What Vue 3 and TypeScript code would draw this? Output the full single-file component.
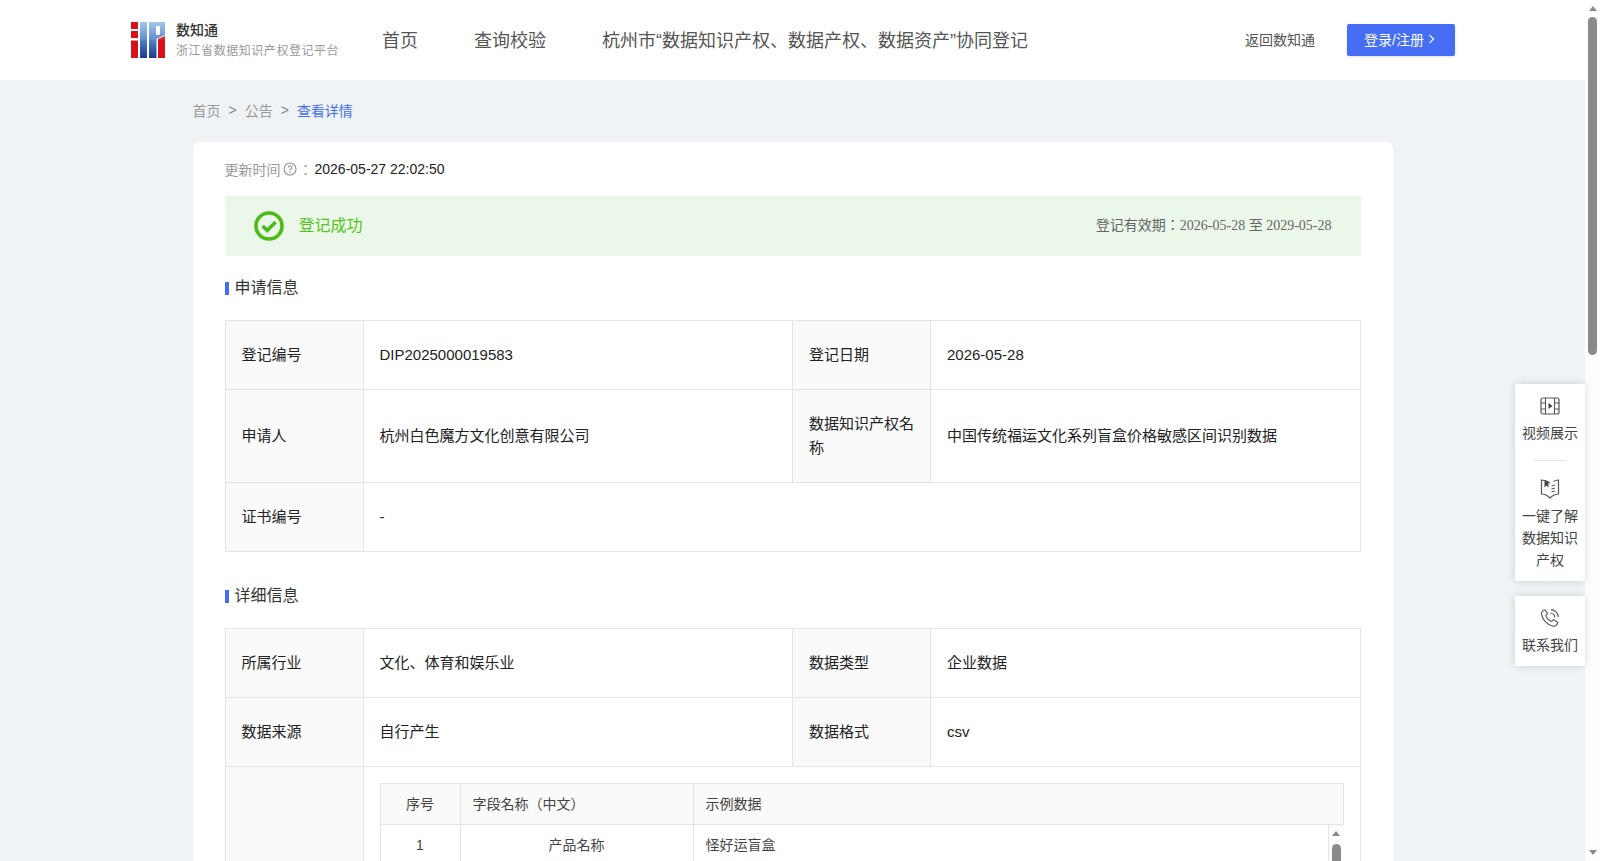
<script setup lang="ts">
const stripes: number[] = [1, 3, 5, 7, 9, 11, 13, 15, 17]
</script>

<template>
  <div class="page">
    <div class="content">
      <header class="topbar">
        <div class="brand">
          <svg class="logo" viewBox="0 0 34 36" aria-hidden="true">
            <defs>
              <linearGradient id="bluegrad" x1="0" y1="0" x2="0" y2="1">
                <stop offset="0" stop-color="#9cc2ea" />
                <stop offset="0.5" stop-color="#4f82c6" />
                <stop offset="1" stop-color="#1c3a8c" />
              </linearGradient>
            </defs>
            <rect x="0" y="0" width="7" height="7" fill="#d9101a" />
            <rect x="0" y="9" width="7" height="7" fill="#d9101a" />
            <rect x="0" y="18.5" width="7" height="17.5" fill="#d9101a" />
            <rect x="9" y="0" width="7" height="36" fill="url(#bluegrad)" />
            <path d="M18 0H34V13L25.5 17V36H18ZM25 4V12.5H29V4Z" fill-rule="evenodd" fill="url(#bluegrad)" />
            <path d="M27 17L34 14V36H27Z" fill="#d9101a" />
            <g stroke="#fff" stroke-opacity=".22" stroke-width=".8">
              <line v-for="y in stripes" :key="y" x1="9" x2="34" :y1="y" :y2="y" />
            </g>
            <rect x="16" y="0" width="2" height="18" fill="#fff" />
            <rect x="25" y="4" width="4" height="8.5" fill="#fff" />
          </svg>
          <div class="brand-text">
            <div class="brand-name">数知通</div>
            <div class="brand-sub">浙江省数据知识产权登记平台</div>
          </div>
        </div>
        <nav class="nav">
          <span>首页</span>
          <span>查询校验</span>
          <span>杭州市“数据知识产权、数据产权、数据资产”协同登记</span>
        </nav>
        <div class="actions">
          <span class="back">返回数知通</span>
          <button class="login">登录/注册
            <svg viewBox="0 0 8 12" class="chev"><path d="M1.5 1L6.5 6L1.5 11" fill="none" stroke="#fff" stroke-width="1.4" /></svg>
          </button>
        </div>
      </header>

      <main class="main">
        <div class="crumbs">
          <span>首页</span><i>&gt;</i><span>公告</span><i>&gt;</i><span class="current">查看详情</span>
        </div>

        <section class="card">
          <div class="updated">
            <span class="muted">更新时间</span>
            <svg class="help" viewBox="0 0 14 14"><circle cx="7" cy="7" r="6" fill="none" stroke="#999" stroke-width="1.2" /><path d="M5.2 5.6A1.8 1.8 0 1 1 7.6 7.3C7.1 7.5 7 7.8 7 8.4" fill="none" stroke="#999" stroke-width="1.2" /><circle cx="7" cy="10.2" r=".8" fill="#999" /></svg>
            <span class="muted colon">：</span>
            <span>2026-05-27 22:02:50</span>
          </div>

          <div class="alert">
            <div class="alert-left">
              <svg class="ok" viewBox="0 0 30 30"><circle cx="15" cy="15" r="13" fill="none" stroke="#4cbb17" stroke-width="3.6" /><path d="M8.6 15L13.2 19.4L21.6 11" fill="none" stroke="#4cbb17" stroke-width="3.6" /></svg>
              <span class="lift">登记成功</span>
            </div>
            <div class="validity lift">登记有效期：2026-05-28 至 2029-05-28</div>
          </div>

          <h3 class="title">申请信息</h3>
          <table class="info">
            <colgroup><col class="c1" /><col class="c2" /><col class="c1" /><col /></colgroup>
            <tbody>
              <tr><th>登记编号</th><td>DIP2025000019583</td><th>登记日期</th><td>2026-05-28</td></tr>
              <tr><th>申请人</th><td>杭州白色魔方文化创意有限公司</td><th>数据知识产权名称</th><td>中国传统福运文化系列盲盒价格敏感区间识别数据</td></tr>
              <tr><th>证书编号</th><td colspan="3">-</td></tr>
            </tbody>
          </table>

          <h3 class="title second">详细信息</h3>
          <table class="info">
            <colgroup><col class="c1" /><col class="c2" /><col class="c1" /><col /></colgroup>
            <tbody>
              <tr><th>所属行业</th><td>文化、体育和娱乐业</td><th>数据类型</th><td>企业数据</td></tr>
              <tr><th>数据来源</th><td>自行产生</td><th>数据格式</th><td>csv</td></tr>
              <tr>
                <th></th>
                <td colspan="3" class="nested-cell">
                  <div class="nested">
                    <div class="nested-head">
                      <div class="n1">序号</div><div class="n2 left">字段名称（中文）</div><div class="n3">示例数据</div>
                    </div>
                    <div class="nested-body">
                      <div class="nested-row">
                        <div class="n1">1</div><div class="n2">产品名称</div><div class="n3">怪好运盲盒</div>
                      </div>
                      <div class="mini-bar" aria-hidden="true">
                        <span class="arrow up"></span>
                        <span class="mini-thumb"></span>
                      </div>
                    </div>
                  </div>
                </td>
              </tr>
            </tbody>
          </table>
        </section>
      </main>
    </div>

    <div class="scrollbar" aria-hidden="true">
      <span class="arrow up"></span>
      <span class="thumb"></span>
      <span class="arrow down"></span>
    </div>

    <aside class="side">
      <div class="side-box">
        <div class="side-item">
          <svg viewBox="0 0 20 18" class="side-icon"><rect x="1" y="1" width="18" height="16" rx="2" fill="none" stroke="#555" stroke-width="1.2" /><path d="M5.5 1V17M14.5 1V17M1 6H5.5M1 12H5.5M14.5 6H19M14.5 12H19" stroke="#555" stroke-width="1.1" fill="none" /><path d="M8.5 6L12.5 9L8.5 12Z" fill="#444" /></svg>
          <span>视频展示</span>
        </div>
        <div class="side-line"></div>
        <div class="side-item">
          <svg viewBox="0 0 20 20" class="side-icon"><path d="M10 4C7.5 2 4.5 1 1.5 1V15C4.5 15 7.5 16.5 10 19C12.5 16.5 15.5 15 18.5 15V1C16.5 1 15 1.5 13.5 2.5" fill="none" stroke="#555" stroke-width="1.2" /><path d="M4.5 1.5V8.5L6.5 6.5L8.5 8.5V3Z" fill="#444" /><path d="M11.5 7L15 6M11.5 10L15 9M11.5 13L15 12" stroke="#555" stroke-width="1.1" /></svg>
          <span>一键了解<br />数据知识<br />产权</span>
        </div>
      </div>
      <div class="side-box">
        <div class="side-item">
          <svg viewBox="0 0 20 20" class="side-icon"><path d="M5 1.8L7.5 5.8L5.8 7.6C6.6 10 8.8 12.4 11.6 13.4L13.5 11.6L17.8 14.2C17.4 16.8 15.4 18.6 13 18.2C7.4 17.2 2.4 11.6 1.6 6.4C1.2 4 2.8 2.4 5 1.8Z" fill="none" stroke="#555" stroke-width="1.1" /><path d="M10.5 5.2A4.4 4.4 0 0 1 14.8 9.5M11 1.6A8 8 0 0 1 18.4 9" fill="none" stroke="#555" stroke-width="1.1" /></svg>
          <span>联系我们</span>
        </div>
      </div>
    </aside>
  </div>
</template>

<style>
html, body { margin: 0; padding: 0; }
</style>

<style scoped>
.page {
  position: relative;
  height: 100vh;
  overflow: hidden;
  background: #eff3f6;
  font-family: "Liberation Sans", "Noto Sans CJK JP", sans-serif;
  color: #222;
}
.content { width: 1585px; }
.topbar {
  height: 80px;
  background: #fff;
  display: flex;
  align-items: center;
  padding: 0 130px 0 131px;
  box-sizing: border-box;
}
.brand { display: flex; align-items: center; gap: 11px; width: 251px; flex: none; }
.logo { width: 34px; height: 36px; flex: none; }
.brand-name { font-size: 14px; font-weight: 500; line-height: 20px; color: #333; margin-top: 1px; }
.brand-sub { font-size: 12px; letter-spacing: 0.55px; line-height: 20px; margin-top: 1px; color: #999; white-space: nowrap; }
.nav { display: flex; gap: 56px; font-size: 18px; color: #555; white-space: nowrap; margin-top: -2px; }
.actions { margin-left: auto; display: flex; align-items: center; gap: 32px; }
.back { font-size: 14px; color: #555; margin-top: -2px; }
.login {
  width: 108px; height: 32px; border: 0; border-radius: 2px;
  background: #456ef5; color: #fff; padding: 0 3px 2px 0;
  font: 14px "Liberation Sans", "Noto Sans CJK JP", sans-serif;
  display: flex; align-items: center; justify-content: center; gap: 4px;
  box-shadow: 0 1px 3px rgba(0,0,0,.12);
}
.chev { width: 7px; height: 10px; }

.main { width: 1200px; margin: 0 auto; }
.crumbs { height: 60px; padding-bottom: 2px; display: flex; align-items: center; font-size: 14px; color: #999; }
.crumbs i { font-style: normal; margin: 0 8px; color: #888; }
.current { color: #456ef5; }

.card { background: #fff; border-radius: 6px 6px 0 0; padding: 16px 32px 40px; }
.updated { display: flex; align-items: center; height: 22px; font-size: 14px; color: #222; }
.muted { color: #999; }
.help { width: 14px; height: 14px; margin-left: 2px; }
.colon { width: 18px; text-align: center; }
.alert {
  margin-top: 16px; height: 60px; background: #ebf7e8;
  display: flex; align-items: center; justify-content: space-between;
  padding: 0 29px 0 29px;
}
.alert-left { display: flex; align-items: center; gap: 15px; font-size: 16px; color: #52c41a; }
.lift { padding-bottom: 5px; }
.ok { width: 30px; height: 30px; }
.validity { font: 14px "Liberation Serif", "Noto Sans CJK JP", serif; color: #666; }

.title {
  margin: 20px 0; height: 24px; line-height: 24px;
  font-size: 16px; font-weight: 400; color: #333;
  display: flex; align-items: center; gap: 6px;
}
.title::before { content: ""; width: 4px; height: 13px; background: #456ef5; }
.title.second { margin: 32px 0 20px; }

.info { width: 100%; border-collapse: collapse; table-layout: fixed; font-size: 15px; line-height: 24px; }
.c1 { width: 138px; }
.c2 { width: 429.5px; }
.info th, .info td { border: 1px solid #e4e4e4; padding: 22px 16px; text-align: left; vertical-align: middle; color: #222; }
.info th { background: #fafafa; font-weight: 400; }
.info .nested-cell { padding: 16px; }

.nested { font-size: 14px; color: #444; }
.nested-head {
  display: flex; height: 42px; box-sizing: border-box; background: #fafafa;
  border: 1px solid #e4e4e4; align-items: stretch;
}
.nested-body {
  position: relative; height: 320px;
  border: 1px solid #e4e4e4; border-top: 0;
}
.nested-row { display: flex; height: 41px; box-sizing: border-box; border-bottom: 1px solid #e4e4e4; margin-right: 15px; }
.n1, .n2, .n3 { display: flex; align-items: center; box-sizing: border-box; }
.n1 { width: 80px; justify-content: center; border-right: 1px solid #e4e4e4; flex: none; }
.n2 { width: 233px; justify-content: center; border-right: 1px solid #e4e4e4; flex: none; }
.n2.left { justify-content: flex-start; padding-left: 12px; }
.n3 { flex: 1; padding-left: 12px; }

.arrow { display: block; width: 0; height: 0; border-left: 4.5px solid transparent; border-right: 4.5px solid transparent; }
.arrow.up { border-bottom: 5px solid #8a8a8a; }
.arrow.down { border-top: 5px solid #8a8a8a; }

.mini-bar {
  position: absolute; top: 0; right: -1px; bottom: 0; width: 16px;
  background: #fcfcfc; border-left: 1px solid #e4e4e4; box-sizing: border-box;
  display: flex; flex-direction: column; align-items: center;
  padding-top: 6px;
}
.mini-thumb { width: 9px; height: 120px; margin-top: 8px; background: #8a8a8a; border-radius: 5px; }

.scrollbar {
  position: absolute; top: 0; right: 0; bottom: 0; width: 15px;
  background: #fdfdfd;
  display: flex; flex-direction: column; align-items: center;
  padding: 6px 0; box-sizing: border-box;
}
.thumb { width: 9px; height: 338px; margin-top: 6px; background: #8a8a8a; border-radius: 5px; }
.scrollbar .down { margin-top: auto; }

.side { position: absolute; right: 15px; top: 384px; width: 70px; display: flex; flex-direction: column; gap: 15px; }
.side-box { background: #fff; box-shadow: 0 0 8px rgba(0,0,0,.14); padding: 12px 0 10px; }
.side-item { display: flex; flex-direction: column; align-items: center; font-size: 14px; line-height: 22px; color: #444; text-align: center; }
.side-icon { width: 20px; height: 20px; margin-bottom: 6px; }
.side-line { width: 32px; height: 1px; background: #e4e4e4; margin: 16px auto 18px; }
</style>
